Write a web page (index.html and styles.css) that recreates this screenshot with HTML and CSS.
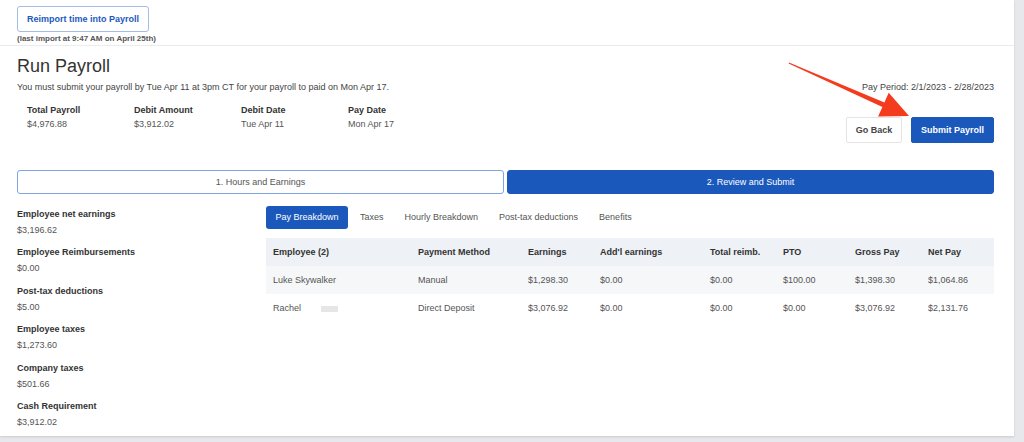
FILE: index.html
```html
<!DOCTYPE html>
<html>
<head>
<meta charset="utf-8">
<link rel="stylesheet" href="styles.css">
</head>
<body>
<div class="card">
  <div class="top">
    <button class="reimport">Reimport time into Payroll</button>
    <div class="last-import">(last import at 9:47 AM on April 25th)</div>
  </div>
  <div class="main">
    <h1 class="title">Run Payroll</h1>
    <div class="subline">
      <span>You must submit your payroll by Tue Apr 11 at 3pm CT for your payroll to paid on Mon Apr 17.</span>
      <span>Pay Period: 2/1/2023 - 2/28/2023</span>
    </div>
    <div class="summary-row">
      <div class="summary">
        <div class="sum-item"><div class="lbl">Total Payroll</div><div class="val">$4,976.88</div></div>
        <div class="sum-item"><div class="lbl">Debit Amount</div><div class="val">$3,912.02</div></div>
        <div class="sum-item"><div class="lbl">Debit Date</div><div class="val">Tue Apr 11</div></div>
        <div class="sum-item"><div class="lbl">Pay Date</div><div class="val">Mon Apr 17</div></div>
      </div>
      <div class="actions">
        <button class="btn-back">Go Back</button>
        <button class="btn-submit">Submit Payroll</button>
      </div>
    </div>
    <div class="steps">
      <div class="step">1. Hours and Earnings</div>
      <div class="step active">2. Review and Submit</div>
    </div>
    <div class="content">
      <div class="sidebar">
        <div class="side-item"><div class="lbl">Employee net earnings</div><div class="val">$3,196.62</div></div>
        <div class="side-item"><div class="lbl">Employee Reimbursements</div><div class="val">$0.00</div></div>
        <div class="side-item"><div class="lbl">Post-tax deductions</div><div class="val">$5.00</div></div>
        <div class="side-item"><div class="lbl">Employee taxes</div><div class="val">$1,273.60</div></div>
        <div class="side-item"><div class="lbl">Company taxes</div><div class="val">$501.66</div></div>
        <div class="side-item"><div class="lbl">Cash Requirement</div><div class="val">$3,912.02</div></div>
      </div>
      <div class="panel">
        <div class="subtabs">
          <div class="subtab active">Pay Breakdown</div>
          <div class="subtab">Taxes</div>
          <div class="subtab">Hourly Breakdown</div>
          <div class="subtab">Post-tax deductions</div>
          <div class="subtab">Benefits</div>
        </div>
        <table class="pay-table">
          <colgroup>
            <col class="c1"><col class="c2"><col class="c3"><col class="c4"><col class="c5"><col class="c6"><col class="c7"><col class="c8">
          </colgroup>
          <thead>
            <tr><th>Employee (2)</th><th>Payment Method</th><th>Earnings</th><th>Add'l earnings</th><th>Total reimb.</th><th>PTO</th><th>Gross Pay</th><th>Net Pay</th></tr>
          </thead>
          <tbody>
            <tr class="shaded"><td>Luke Skywalker</td><td>Manual</td><td>$1,298.30</td><td>$0.00</td><td>$0.00</td><td>$100.00</td><td>$1,398.30</td><td>$1,064.86</td></tr>
            <tr><td>Rachel <span class="redact"></span></td><td>Direct Deposit</td><td>$3,076.92</td><td>$0.00</td><td>$0.00</td><td>$0.00</td><td>$3,076.92</td><td>$2,131.76</td></tr>
          </tbody>
        </table>
      </div>
    </div>
  </div>
  <svg class="arrow" width="1014" height="436" viewBox="0 0 1014 436">
    <polygon points="789,62.4 884.4,102.4 888.7,92.8 909,116 878.1,116.6 882.4,107 788.6,63.6" fill="#f43b1e"/>
  </svg>
</div>
</body>
</html>
```
FILE: styles.css
```css
* { box-sizing: border-box; }
html, body { margin: 0; padding: 0; }
body {
  background: #e7e8ec;
  font-family: "Liberation Sans", Arial, sans-serif;
  width: 1024px;
  height: 442px;
  overflow: hidden;
}
.card {
  position: relative;
  width: 1014px;
  height: 436px;
  background: #fff;
  box-shadow: 0 1px 2px rgba(0,0,0,0.12);
}
.top {
  height: 46px;
  padding: 6px 17px 0;
  border-bottom: 1px solid #ececec;
}
.reimport {
  display: block;
  width: 132px;
  height: 26px;
  padding: 0;
  background: #fff;
  border: 1px solid #a4bde6;
  border-radius: 3px;
  color: #1b59bd;
  font-family: inherit;
  font-weight: bold;
  font-size: 9px;
}
.last-import {
  margin-top: 1px;
  font-size: 8px;
  font-weight: bold;
  color: #555;
  line-height: 11px;
}
.main {
  padding: 9px 20px 0 17px;
}
.title {
  margin: 0;
  font-size: 18px;
  font-weight: normal;
  line-height: 22px;
  color: #333;
}
.subline {
  margin-top: 3px;
  display: flex;
  justify-content: space-between;
  font-size: 9px;
  line-height: 14px;
  color: #444;
}
.summary-row {
  display: flex;
  justify-content: space-between;
  align-items: flex-start;
  margin-top: 9px;
}
.summary {
  display: flex;
  padding-left: 10px;
}
.sum-item { width: 107px; }
.lbl {
  font-size: 9px;
  font-weight: bold;
  color: #333;
  line-height: 14px;
}
.val {
  font-size: 9px;
  color: #555;
  line-height: 14px;
}
.actions {
  display: flex;
  gap: 9px;
  margin-top: 14px;
}
.btn-back, .btn-submit {
  height: 26px;
  font-family: inherit;
  font-size: 9px;
  font-weight: bold;
  border-radius: 2px;
  padding: 0;
}
.btn-back {
  width: 56px;
  background: #fff;
  border: 1px solid #e4e4e4;
  color: #444;
}
.btn-submit {
  width: 83px;
  background: #1a58bb;
  border: 1px solid #1a58bb;
  color: #fff;
}
.steps {
  display: flex;
  gap: 3px;
  margin-top: 27px;
}
.step {
  flex: 1;
  height: 24px;
  line-height: 22px;
  text-align: center;
  font-size: 9px;
  color: #555;
  border: 1px solid #7fa6e2;
  border-radius: 3px;
}
.step.active {
  background: #1a58bb;
  border-color: #1a58bb;
  color: #fff;
}
.content {
  display: flex;
  margin-top: 12px;
}
.sidebar {
  width: 249px;
  display: flex;
  flex-direction: column;
  gap: 6.4px;
}
.side-item .lbl { line-height: 16px; }
.side-item .val { line-height: 16px; }
.panel { flex: 1; }
.subtabs {
  display: flex;
  gap: 3px;
  height: 23px;
}
.subtab {
  padding: 0 9px;
  line-height: 23px;
  font-size: 9px;
  color: #555;
  border-radius: 3px;
}
.subtab.active {
  width: 82px;
  background: #1a58bb;
  color: #fff;
  text-align: center;
  padding: 0;
}
.pay-table {
  margin-top: 9px;
  width: 728px;
  border-collapse: collapse;
  table-layout: fixed;
  font-size: 9px;
}
.c1 { width: 145px; }
.c2 { width: 110px; }
.c3 { width: 72px; }
.c4 { width: 110px; }
.c5 { width: 73px; }
.c6 { width: 72px; }
.c7 { width: 73px; }
.c8 { width: 73px; }
.pay-table th, .pay-table td {
  height: 28px;
  padding: 0 0 0 7px;
  text-align: left;
  white-space: nowrap;
}
.pay-table th {
  background: #eef1f5;
  font-weight: bold;
  color: #333;
}
.pay-table td { color: #555; }
.pay-table tr.shaded td { background: #f6f7f9; }
.redact {
  display: inline-block;
  width: 17px;
  height: 6px;
  margin-left: 17px;
  background: #e6e6e6;
  vertical-align: middle;
}
.arrow {
  position: absolute;
  left: 0;
  top: 0;
  pointer-events: none;
}
```
